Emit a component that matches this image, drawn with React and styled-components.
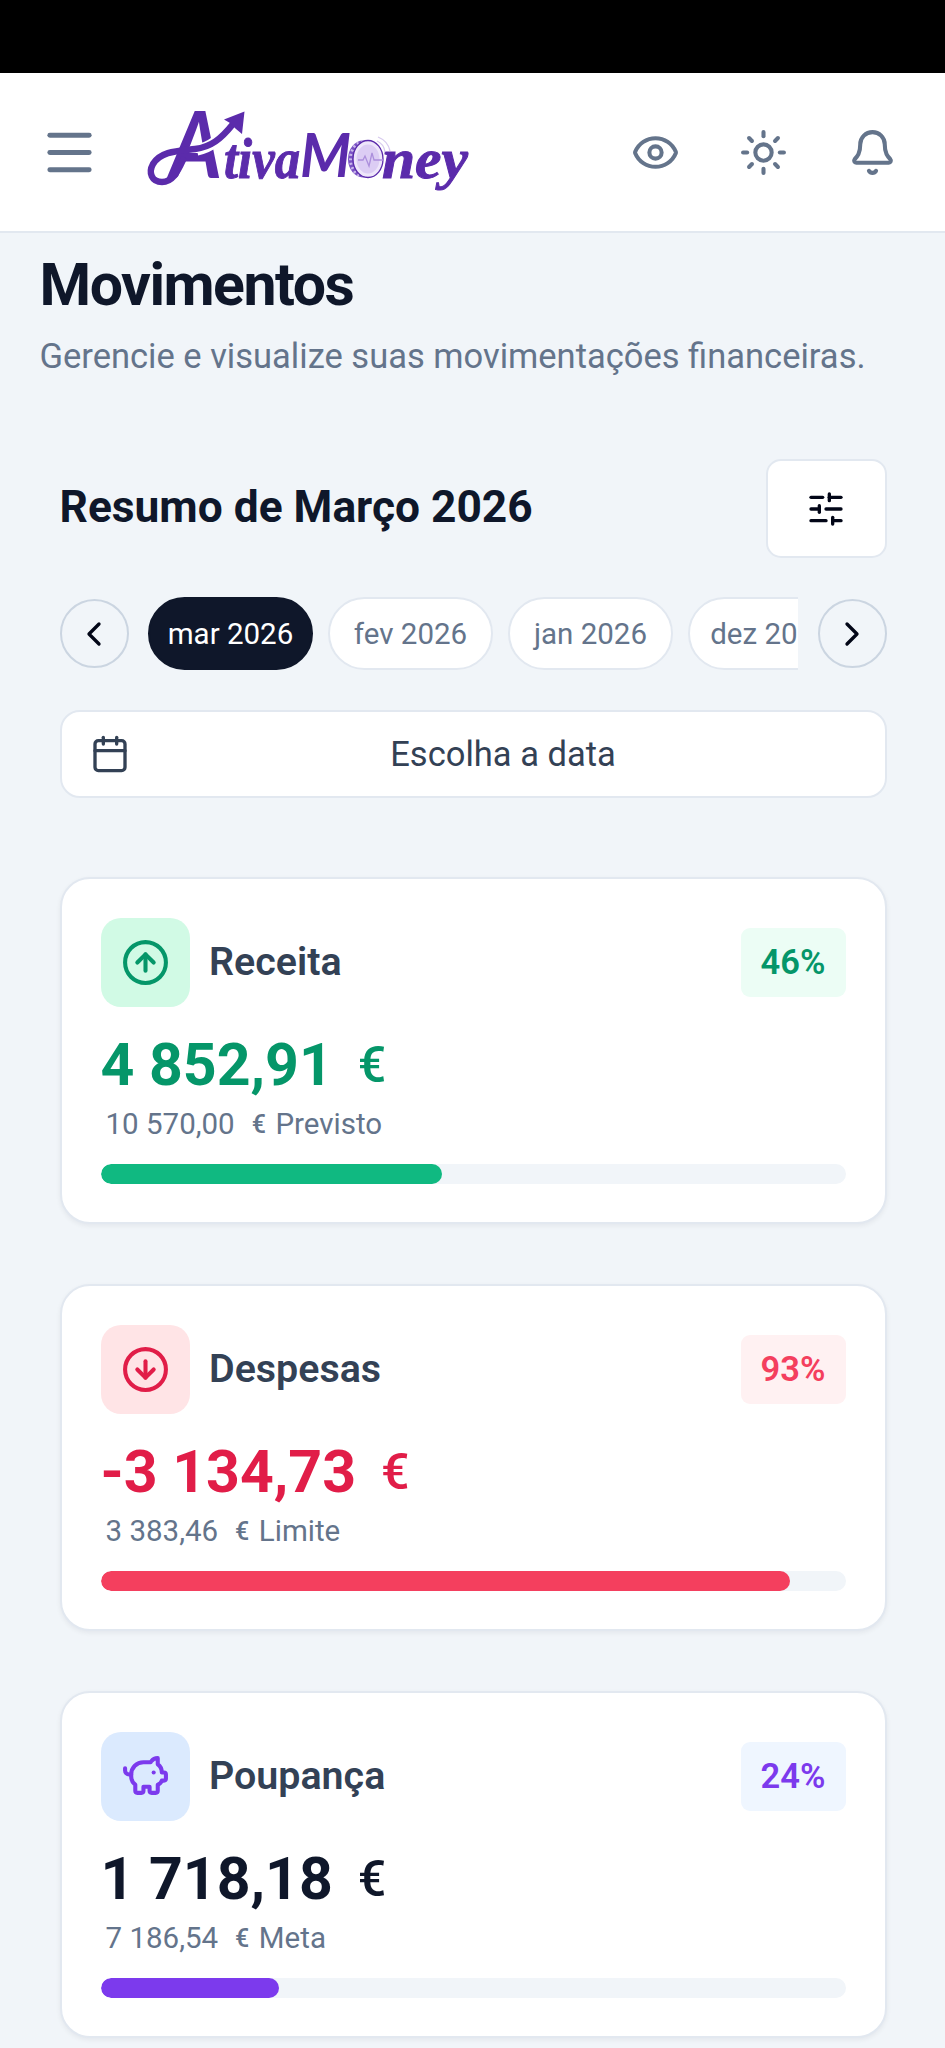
import React from 'react';
import styled, { createGlobalStyle } from 'styled-components';
import {
    Menu, Eye, Sun, Bell, SlidersHorizontal, ChevronLeft, ChevronRight,
    Calendar, CircleArrowUp, CircleArrowDown, PiggyBank
} from 'lucide-react';

const GlobalStyle = createGlobalStyle`
*{
box-sizing:border-box;
}
body{
margin:0;
background:#f1f5f9;
font-family:Roboto, sans-serif;
color:#0f172a;
}
button{
font-family:inherit;
padding:0;
margin:0;
}
`;

const Page = styled.div`
display:flex;
flex-direction:column;
width:945px;
height:2048px;
overflow:hidden;
`;
const StatusBar = styled.div`
height:73px;
flex-shrink:0;
background:#000;
`;
const Header = styled.header`
display:flex;
align-items:center;
height:160px;
flex-shrink:0;
padding:0 48.5px 0 39.5px;
background:white;
border-bottom:2px solid #e2e8f0;
color:#64748b;
svg{
    display:block;
}
`;
const IconButton = styled.button`
display:flex;
border:none;
background:none;
color:inherit;
`;
const LogoLink = styled.a`
display:block;
margin-left:42px;
`;
const LogoSvg = styled.svg`
overflow:visible;
`;
const HeaderActions = styled.div`
display:flex;
gap:59.3px;
margin-left:auto;
`;
const PageTitle = styled.div`
padding:15px 39.5px 0;
`;
const Title = styled.h1`
margin:0;
font-size:59px;
line-height:74px;
font-weight:700;
letter-spacing:-1.5px;
`;
const Subtitle = styled.p`
margin:10px 0 0;
font-size:34.5px;
line-height:49px;
color:#64748b;
white-space:nowrap;
`;
const Summary = styled.section`
padding:78px 58.5px 0 59.5px;
`;
const SummaryHeader = styled.div`
display:flex;
align-items:center;
justify-content:space-between;
height:99px;
`;
const SummaryTitle = styled.h2`
margin:-3px 0 0;
font-size:44.3px;
line-height:60px;
font-weight:700;
`;
const FilterButton = styled.button`
display:flex;
align-items:center;
justify-content:center;
width:121px;
height:99px;
border:2px solid #e2e8f0;
border-radius:15px;
background:white;
color:#020617;
`;
const MonthRow = styled.div`
display:flex;
align-items:center;
gap:19.5px;
margin-top:39px;
`;
const RoundButton = styled.button`
display:flex;
align-items:center;
justify-content:center;
flex-shrink:0;
width:69px;
height:69px;
border:2px solid #cbd5e1;
border-radius:50%;
background:transparent;
color:#020617;
`;
const MonthList = styled.div`
display:flex;
flex:1;
gap:15px;
overflow:hidden;
`;
const MonthChip = styled.button`
flex:0 0 165px;
height:73px;
border:2px solid ${(props) => props.$active ? '#0f172a' : '#e2e8f0'};
border-radius:37px;
background:${(props) => props.$active ? '#0f172a' : 'white'};
color:${(props) => props.$active ? 'white' : '#64748b'};
font-size:29.5px;
white-space:nowrap;
`;
const DateButton = styled.button`
display:flex;
align-items:center;
width:100%;
height:88px;
margin-top:39.5px;
padding:0 23px 0 28px;
border:2px solid #e2e8f0;
border-radius:20px;
background:white;
color:#334155;
`;
const DateLabel = styled.span`
flex:1;
margin-left:15px;
text-align:center;
font-size:34.5px;
`;
const CardList = styled.div`
display:flex;
flex-direction:column;
gap:59.5px;
margin-top:79px;
`;
const Card = styled.article`
height:347.500px;
padding:39px 39px;
border:2px solid #e2e8f0;
border-radius:30px;
background:white;
box-shadow:0 2px 5px rgba(15, 23, 42, 0.06);
`;
const CardHeader = styled.div`
display:flex;
align-items:center;
`;
const IconTile = styled.div`
display:flex;
align-items:center;
justify-content:center;
width:89px;
height:89px;
border-radius:20px;
background:${(props) => props.$bg};
color:${(props) => props.$color};
`;
const CardTitle = styled.h3`
margin:0 0 0 19.5px;
font-size:39.4px;
line-height:56px;
font-weight:600;
color:#334155;
`;
const Percent = styled.span`
margin-left:auto;
padding:0 20px;
border-radius:9px;
font-size:34.5px;
line-height:68px;
height:69px;
font-weight:600;
background:${(props) => props.$bg};
color:${(props) => props.$color};
`;
const Amount = styled.div`
display:flex;
align-items:baseline;
margin-top:21.5px;
font-size:59px;
line-height:74px;
font-weight:700;
color:${(props) => props.$color};
`;
const AmountCurrency = styled.span`
position:relative;
top:-3px;
margin-left:25px;
font-size:50px;
line-height:50px;
font-weight:500;
`;
const Target = styled.div`
display:flex;
align-items:baseline;
margin-top:2.5px;
padding-left:5px;
font-size:29.5px;
line-height:39px;
color:#64748b;
`;
const TargetCurrency = styled.span`
position:relative;
top:-1px;
margin:0 9.5px 0 17px;
font-size:25px;
line-height:25px;
font-weight:500;
`;
const Track = styled.div`
height:20px;
margin-top:20px;
border-radius:10px;
background:#f1f5f9;
overflow:hidden;
`;
const Bar = styled.div`
height:100%;
border-radius:10px;
background:${(props) => props.$color};
`;

const months = ['mar 2026', 'fev 2026', 'jan 2026', 'dez 2025'];

const cards = [
    {
        title: 'Receita', icon: CircleArrowUp, percent: 46, progress: 45.9,
        amount: '4 852,91', target: '10 570,00', targetLabel: 'Previsto',
        color: '#059669', amountColor: '#059669', tile: '#d1fae5', badge: '#ecfdf5',
        badgeColor: '#059669', bar: '#10b981'
    },
    {
        title: 'Despesas', icon: CircleArrowDown, percent: 93, progress: 92.6,
        amount: '-3 134,73', target: '3 383,46', targetLabel: 'Limite',
        color: '#e11d48', amountColor: '#e11d48', tile: '#ffe4e6', badge: '#fff1f2',
        badgeColor: '#f43f5e', bar: '#f43f5e'
    },
    {
        title: 'Poupança', icon: PiggyBank, percent: 24, progress: 23.9,
        amount: '1 718,18', target: '7 186,54', targetLabel: 'Meta',
        color: '#7c3aed', amountColor: '#0f172a', tile: '#dbeafe', badge: '#eff6ff',
        badgeColor: '#7c3aed', bar: '#7c3aed'
    }
];

const LogoText = styled.text`
font-family:"Liberation Serif", serif;
font-weight:700;
font-style:italic;
fill:#5b2bab;
stroke:#5b2bab;
stroke-width:1;
`;
const LogoCapital = styled(LogoText)`
font-family:Lato, sans-serif;
stroke-width:0;
`;

const Logo = () => (
    <LogoSvg width="340" height="110" viewBox="0 0 340 110">
        <LogoCapital x="29" y="81" fontSize="92" textLength="52" lengthAdjust="spacingAndGlyphs">A</LogoCapital>
        {/* loop that turns into the rising arrow */}
        <path d="M56 53C70 50 80 42 92 27" fill="none" stroke="white" strokeWidth="11" />
        <path d="M42 63C36 76 31 85 21 85C11 85 7 76 12 67C20 54 37 54 54 52C70 50 80 42 92 27" fill="none" stroke="#5b2bab" strokeWidth="6.5" strokeLinecap="round" />
        <path d="M83 22.500L103.500 14.500L101 37L95 32L89 26Z" fill="#5b2bab" />
        <LogoText x="83" y="81" fontSize="58" textLength="76" lengthAdjust="spacingAndGlyphs">tiva</LogoText>
        <LogoCapital x="159" y="80" fontSize="61" textLength="51" lengthAdjust="spacingAndGlyphs">M</LogoCapital>
        <LogoText x="241" y="81" fontSize="58" textLength="86" lengthAdjust="spacingAndGlyphs">ney</LogoText>
        {/* coin */}
        <ellipse cx="222" cy="62" rx="15" ry="18.500" fill="#7a52c4" />
        <ellipse cx="222" cy="62" rx="12.500" ry="17" fill="none" stroke="#c9b6ea" strokeWidth="3" strokeDasharray="2 2.500" />
        <ellipse cx="227" cy="62" rx="15" ry="18.500" fill="#eee6fa" stroke="#5b2bab" strokeWidth="1.300" />
        <ellipse cx="227" cy="62" rx="11.500" ry="14.500" fill="#dccdf4" />
        <path d="M217 63H222L224 59L228 69L231 56L233 63H242" fill="none" stroke="#ac8fdc" strokeWidth="1.300" />
        <path d="M236 44Q243 47 244 55M237 40Q247 44 249 54" fill="none" stroke="#d7caee" strokeWidth="1.300" />
    </LogoSvg>
);

const SummaryCard = ({ data }) => {
    const Icon = data.icon;
    return <Card>
        <CardHeader>
            <IconTile $bg={data.tile} $color={data.color}><Icon size={49} /></IconTile>
            <CardTitle>{data.title}</CardTitle>
            <Percent $bg={data.badge} $color={data.badgeColor}>{data.percent}%</Percent>
        </CardHeader>
        <Amount $color={data.amountColor}>
            {data.amount}
            <AmountCurrency>€</AmountCurrency>
        </Amount>
        <Target>
            {data.target}
            <TargetCurrency>€</TargetCurrency>
            {data.targetLabel}
        </Target>
        <Track>
            <Bar $color={data.bar} style={{ width: `${data.progress}%` }} />
        </Track>
    </Card>
}

export default function App() {
    return (
        <Page>
            <GlobalStyle />
            <StatusBar />
            <Header>
                <IconButton aria-label="Menu"><Menu size={59} /></IconButton>
                <LogoLink><Logo /></LogoLink>
                <HeaderActions>
                    <IconButton><Eye size={49} /></IconButton>
                    <IconButton><Sun size={49} /></IconButton>
                    <IconButton><Bell size={49} /></IconButton>
                </HeaderActions>
            </Header>
            <PageTitle>
                <Title>Movimentos</Title>
                <Subtitle>Gerencie e visualize suas movimentações financeiras.</Subtitle>
            </PageTitle>
            <Summary>
                <SummaryHeader>
                    <SummaryTitle>Resumo de Março 2026</SummaryTitle>
                    <FilterButton><SlidersHorizontal size={40} /></FilterButton>
                </SummaryHeader>
                <MonthRow>
                    <RoundButton><ChevronLeft size={40} /></RoundButton>
                    <MonthList>
                        {months.map((month, i) => <MonthChip key={month} $active={i === 0}>{month}</MonthChip>)}
                    </MonthList>
                    <RoundButton><ChevronRight size={40} /></RoundButton>
                </MonthRow>
                <DateButton>
                    <Calendar size={40} />
                    <DateLabel>Escolha a data</DateLabel>
                </DateButton>
                <CardList>
                    {cards.map((card) => <SummaryCard key={card.title} data={card} />)}
                </CardList>
            </Summary>
        </Page>
    )
}
